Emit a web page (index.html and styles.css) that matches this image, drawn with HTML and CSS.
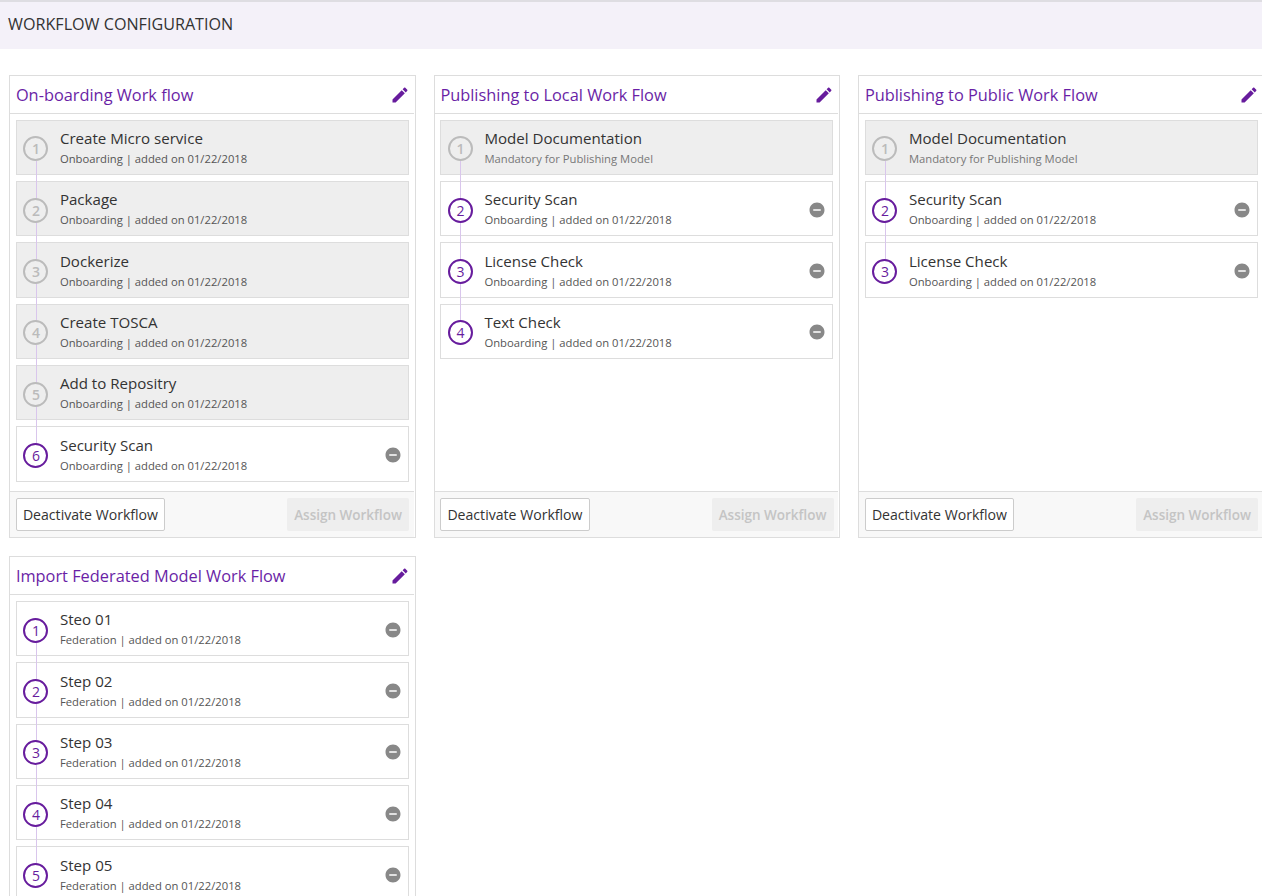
FILE: index.html
```html
<!DOCTYPE html>
<html lang="en">
<head>
    <meta charset="UTF-8">
    <title>Workflow Configuration</title>
    <link rel="stylesheet" href="styles.css">
</head>
<body>
<svg class="defs">
    <symbol id="icon-edit" viewBox="0 0 24 24"><path d="M3 17.25V21h3.75L17.81 9.94l-3.75-3.75L3 17.25zM20.71 7.04c.39-.39.39-1.02 0-1.41l-2.34-2.34c-.39-.39-1.02-.39-1.41 0l-1.83 1.83 3.75 3.75 1.83-1.83z"/></symbol>
    <symbol id="icon-remove" viewBox="0 0 24 24"><path d="M12 2C6.48 2 2 6.48 2 12s4.48 10 10 10 10-4.48 10-10S17.52 2 12 2zm5 11H7v-2h10v2z"/></symbol>
</svg>
<div class="page">
    <h1 class="page-title">WORKFLOW CONFIGURATION</h1>

    <div class="cards">
        <section class="card">
            <div class="card-head">
                <h2>On-boarding Work flow</h2>
                <svg class="edit"><use href="#icon-edit"/></svg>
            </div>
            <ul class="steps">
                <li class="step locked"><span class="num">1</span><div class="info"><b>Create Micro service</b><small>Onboarding | added on 01/22/2018</small></div></li>
                <li class="step locked"><span class="num">2</span><div class="info"><b>Package</b><small>Onboarding | added on 01/22/2018</small></div></li>
                <li class="step locked"><span class="num">3</span><div class="info"><b>Dockerize</b><small>Onboarding | added on 01/22/2018</small></div></li>
                <li class="step locked"><span class="num">4</span><div class="info"><b>Create TOSCA</b><small>Onboarding | added on 01/22/2018</small></div></li>
                <li class="step locked"><span class="num">5</span><div class="info"><b>Add to Repositry</b><small>Onboarding | added on 01/22/2018</small></div></li>
                <li class="step"><span class="num">6</span><div class="info"><b>Security Scan</b><small>Onboarding | added on 01/22/2018</small></div><svg class="remove"><use href="#icon-remove"/></svg></li>
            </ul>
            <div class="card-foot">
                <button class="btn">Deactivate Workflow</button>
                <button class="btn" disabled>Assign Workflow</button>
            </div>
        </section>

        <section class="card">
            <div class="card-head">
                <h2>Publishing to Local Work Flow</h2>
                <svg class="edit"><use href="#icon-edit"/></svg>
            </div>
            <ul class="steps">
                <li class="step locked"><span class="num">1</span><div class="info"><b>Model Documentation</b><small class="note">Mandatory for Publishing Model</small></div></li>
                <li class="step"><span class="num">2</span><div class="info"><b>Security Scan</b><small>Onboarding | added on 01/22/2018</small></div><svg class="remove"><use href="#icon-remove"/></svg></li>
                <li class="step"><span class="num">3</span><div class="info"><b>License Check</b><small>Onboarding | added on 01/22/2018</small></div><svg class="remove"><use href="#icon-remove"/></svg></li>
                <li class="step"><span class="num">4</span><div class="info"><b>Text Check</b><small>Onboarding | added on 01/22/2018</small></div><svg class="remove"><use href="#icon-remove"/></svg></li>
            </ul>
            <div class="card-foot">
                <button class="btn">Deactivate Workflow</button>
                <button class="btn" disabled>Assign Workflow</button>
            </div>
        </section>

        <section class="card">
            <div class="card-head">
                <h2>Publishing to Public Work Flow</h2>
                <svg class="edit"><use href="#icon-edit"/></svg>
            </div>
            <ul class="steps">
                <li class="step locked"><span class="num">1</span><div class="info"><b>Model Documentation</b><small class="note">Mandatory for Publishing Model</small></div></li>
                <li class="step"><span class="num">2</span><div class="info"><b>Security Scan</b><small>Onboarding | added on 01/22/2018</small></div><svg class="remove"><use href="#icon-remove"/></svg></li>
                <li class="step"><span class="num">3</span><div class="info"><b>License Check</b><small>Onboarding | added on 01/22/2018</small></div><svg class="remove"><use href="#icon-remove"/></svg></li>
            </ul>
            <div class="card-foot">
                <button class="btn">Deactivate Workflow</button>
                <button class="btn" disabled>Assign Workflow</button>
            </div>
        </section>

        <section class="card">
            <div class="card-head">
                <h2>Import Federated Model Work Flow</h2>
                <svg class="edit"><use href="#icon-edit"/></svg>
            </div>
            <ul class="steps">
                <li class="step"><span class="num">1</span><div class="info"><b>Steo 01</b><small>Federation | added on 01/22/2018</small></div><svg class="remove"><use href="#icon-remove"/></svg></li>
                <li class="step"><span class="num">2</span><div class="info"><b>Step 02</b><small>Federation | added on 01/22/2018</small></div><svg class="remove"><use href="#icon-remove"/></svg></li>
                <li class="step"><span class="num">3</span><div class="info"><b>Step 03</b><small>Federation | added on 01/22/2018</small></div><svg class="remove"><use href="#icon-remove"/></svg></li>
                <li class="step"><span class="num">4</span><div class="info"><b>Step 04</b><small>Federation | added on 01/22/2018</small></div><svg class="remove"><use href="#icon-remove"/></svg></li>
                <li class="step"><span class="num">5</span><div class="info"><b>Step 05</b><small>Federation | added on 01/22/2018</small></div><svg class="remove"><use href="#icon-remove"/></svg></li>
            </ul>
        </section>
    </div>
</div>
</body>
</html>
```

FILE: styles.css
```css
* {
    box-sizing: border-box;
}
body {
    margin: 0;
    font-family: "Open Sans", "Liberation Sans", sans-serif;
    color: #333;
    background-color: #fff;
}
.defs {
    display: none;
}
.page {
    height: 100vh;
    overflow: hidden;
}
.page-title {
    margin: 0;
    height: 49px;
    padding: 12px 8px 0;
    border-top: 2px solid #dedde2;
    background-color: #f4f1f9;
    font-size: 16.15px;
    line-height: 20px;
    font-weight: 400;
}
.cards {
    display: grid;
    grid-template-columns: repeat(3, 406.5px);
    column-gap: 18px;
    row-gap: 18.5px;
    padding: 26px 0 0 9px;
}
.card {
    display: flex;
    flex-direction: column;
    border: 1px solid #ddd;
    background-color: #fff;
}
.card-head {
    display: flex;
    align-items: center;
    justify-content: space-between;
    height: 38px;
    margin-right: 1px;
    padding: 0 4px 0 5.9px;
    border-bottom: 1px solid #ddd;
}
.card-head h2 {
    margin: 0;
    font-size: 16.35px;
    font-weight: 400;
    color: #6a1fa6;
}
.edit {
    width: 20px;
    height: 20px;
    fill: #671c9d;
}
.steps {
    flex: 1;
    margin: 0;
    padding: 5.6px 6px 9px 5.9px;
    list-style: none;
}
.step {
    position: relative;
    display: flex;
    align-items: center;
    height: 55.5px;
    margin-bottom: 5.85px;
    padding: 0 6px 0 6.6px;
    border: 1px solid #ddd;
    background-color: #fff;
}
.step:last-child {
    margin-bottom: 0;
}
.step.locked {
    background-color: #eee;
}
/* line joining one number to the next */
.step:not(:last-child)::after {
    content: "";
    position: absolute;
    z-index: 1;
    left: 19px;
    top: 40px;
    width: 1px;
    height: 38px;
    background-color: #d9c6ec;
}
.num {
    position: relative;
    z-index: 2;
    flex: none;
    width: 25px;
    height: 25px;
    margin-top: 3px;
    border: 2px solid #671c9d;
    border-radius: 50%;
    background-color: #fff;
    color: #671c9d;
    font-size: 14px;
    line-height: 21px;
    text-align: center;
}
.locked .num {
    border-color: #bbb;
    background-color: #eee;
    color: #bbb;
    font-weight: 600;
}
.info {
    flex: 1;
    margin-left: 11.4px;
}
.info b {
    display: block;
    font-size: 15.1px;
    line-height: 18px;
    font-weight: 400;
}
.info small {
    display: block;
    margin-top: 4px;
    font-size: 11.25px;
    line-height: 15px;
    color: #555;
}
.info small.note {
    color: #777;
}
.remove {
    flex: none;
    width: 18px;
    height: 18px;
    margin-top: 2px;
    fill: #888;
}
.card-foot {
    display: flex;
    justify-content: space-between;
    height: 46px;
    margin-right: 1px;
    padding: 6px 4.5px 0 5.9px;
    border-top: 1px solid #ddd;
    background-color: #f8f8f8;
}
.btn {
    height: 33px;
    padding: 0 6px;
    border: 1px solid #ccc;
    border-radius: 2px;
    background-color: #fff;
    color: #333;
    font-family: inherit;
    font-size: 14.1px;
    cursor: pointer;
}
.btn:disabled {
    padding: 2px 7px 0;
    border: none;
    background-color: #eee;
    color: #c4c4c4;
    font-size: 13.5px;
    font-weight: 600;
    cursor: default;
}
```
